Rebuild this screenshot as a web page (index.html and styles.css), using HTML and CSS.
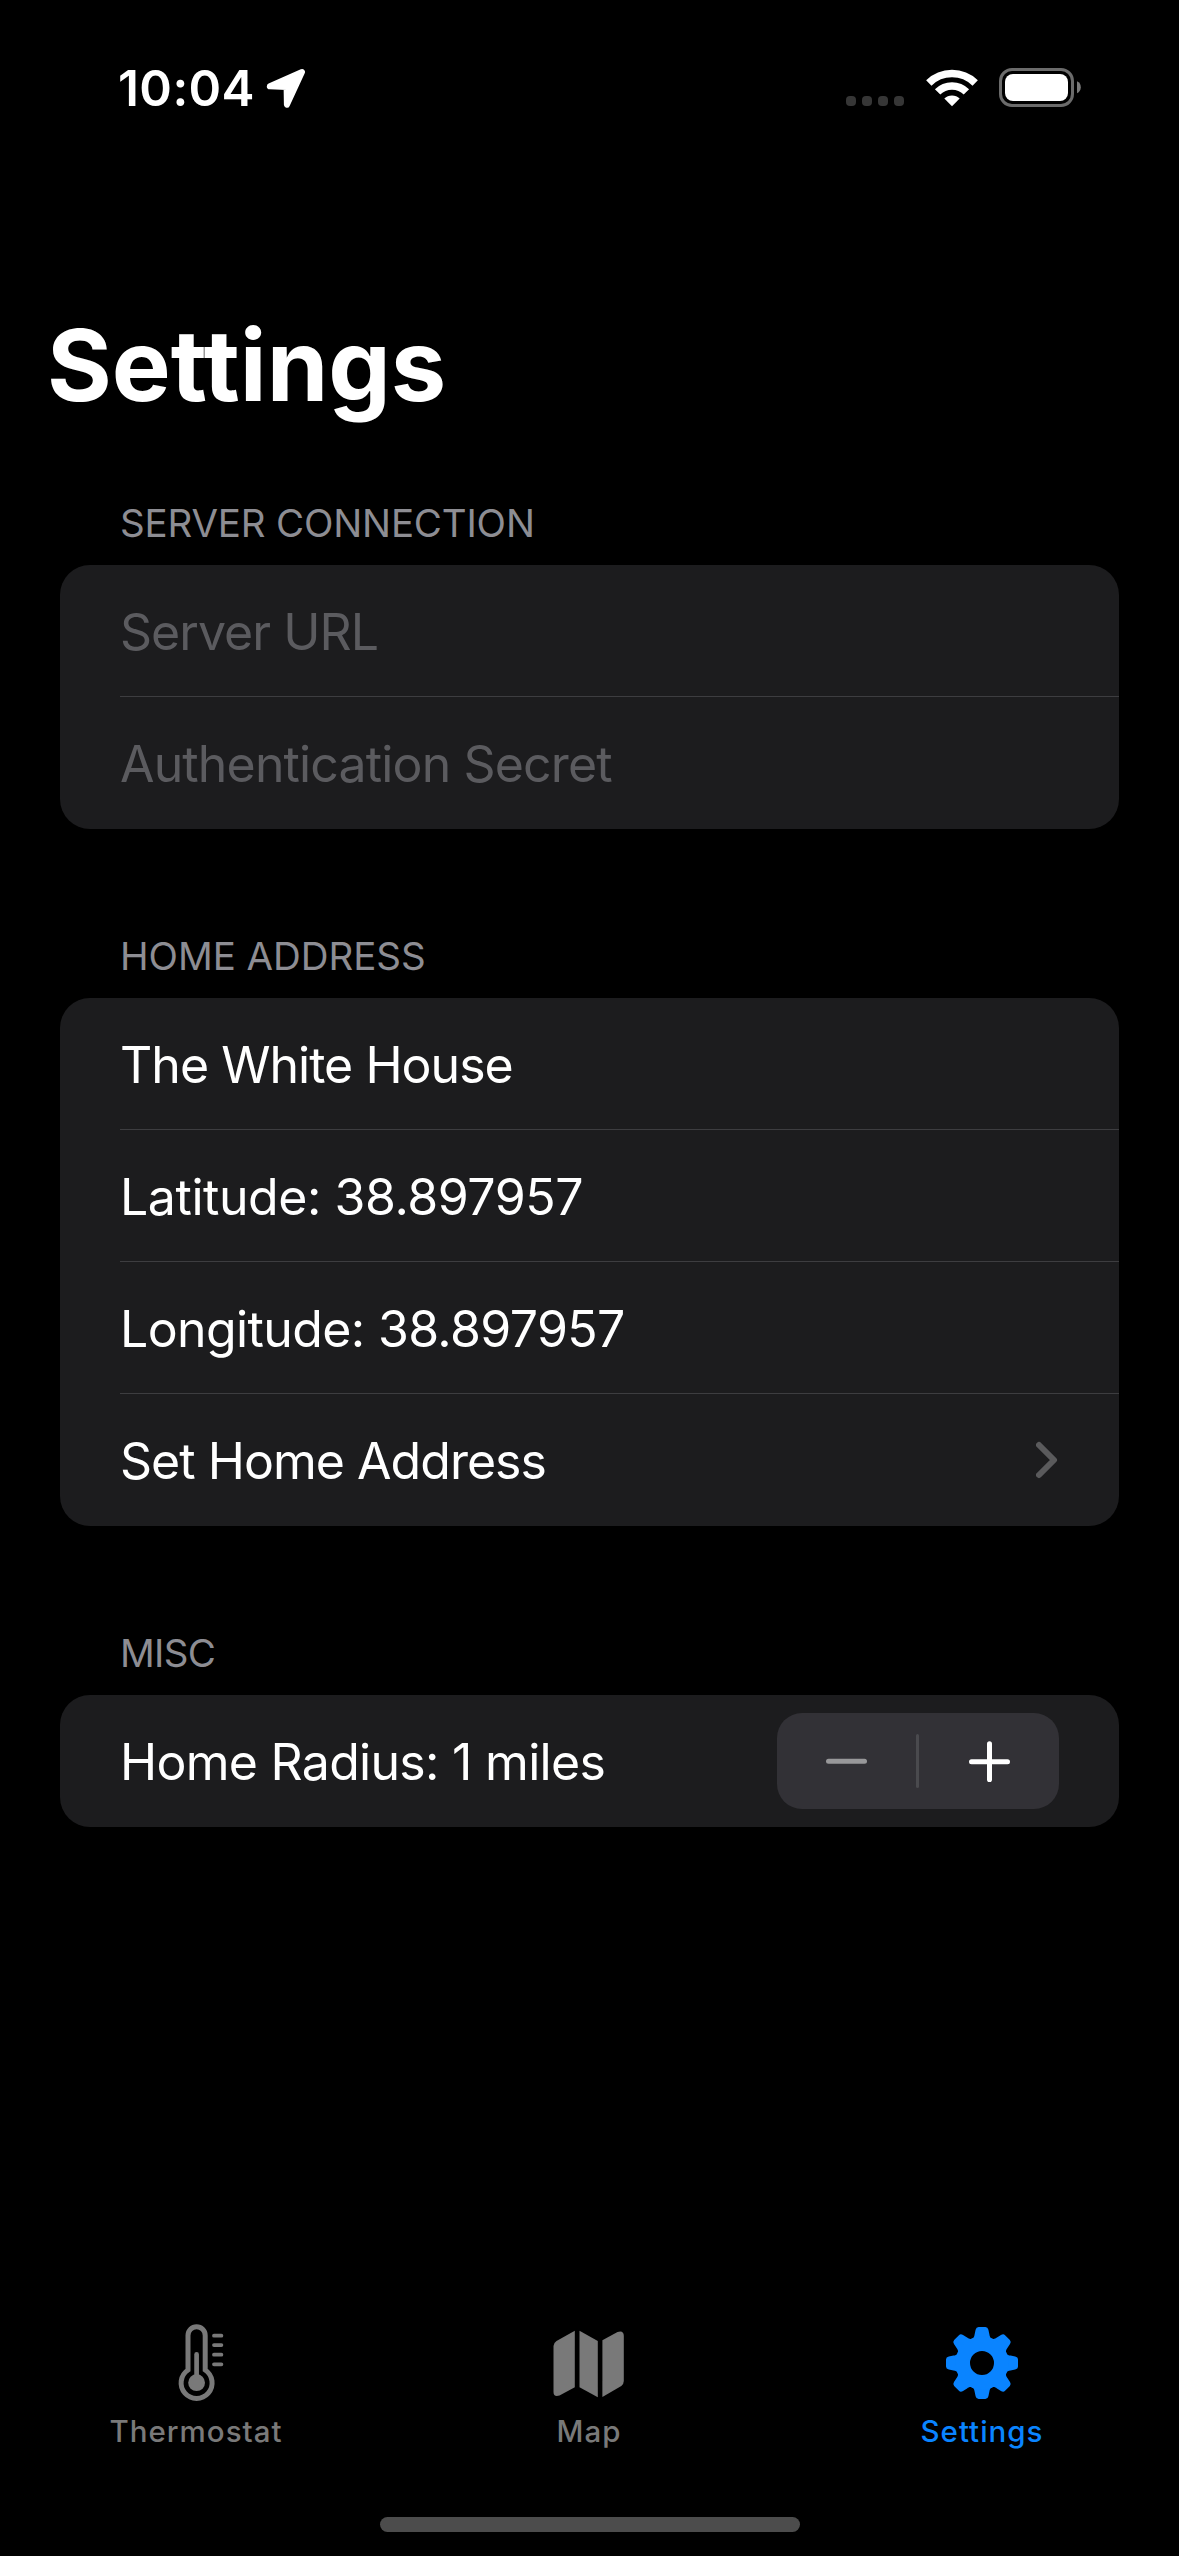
FILE: index.html
```html
<!DOCTYPE html>
<html lang="en">
<head>
<meta charset="utf-8">
<title>Settings</title>
<link rel="stylesheet" href="styles.css">
</head>
<body>
<div class="screen">
  <header class="status-bar">
    <div class="status-left">
      <span class="clock">10:04</span>
      <svg class="location" width="40" height="40" viewBox="0 0 40 40"><path d="M3.8 18.3 36 4 20.9 36.7 20.6 19Z" fill="#fff" stroke="#fff" stroke-width="6" stroke-linejoin="round"/></svg>
    </div>
    <div class="status-right">
      <div class="signal"><i></i><i></i><i></i><i></i></div>
      <svg width="54" height="38" viewBox="0 0 54 38">
        <g fill="none" stroke="#fff" stroke-width="7.6">
          <path d="M3.8 14A33.2 33.2 0 0 1 50.2 14"/>
          <path d="M12.6 22.9A20.4 20.4 0 0 1 41.4 22.9"/>
        </g>
        <path d="M27 37.3 19.3 29.6A11 11 0 0 1 34.7 29.6Z" fill="#fff"/>
      </svg>
      <svg width="82" height="40" viewBox="0 0 82 40">
        <rect x="1.5" y="1.5" width="72" height="36" rx="11.5" fill="none" stroke="#6b6b6b" stroke-width="3"/>
        <rect x="6" y="6" width="63" height="27" rx="8" fill="#fff"/>
        <path d="M78 13.3Q81.8 15 81.8 19.2T78 25.3Z" fill="#7a7a7a"/>
      </svg>
    </div>
  </header>

  <main class="content">
    <h1 class="title">Settings</h1>

    <section class="section">
      <h2 class="label">SERVER CONNECTION</h2>
      <div class="card">
        <div class="row placeholder"><span>Server URL</span></div>
        <div class="row placeholder"><span class="secret">Authentication Secret</span></div>
      </div>
    </section>

    <section class="section">
      <h2 class="label label-wide">HOME ADDRESS</h2>
      <div class="card">
        <div class="row"><span>The White House</span></div>
        <div class="row"><span class="latitude">Latitude: 38.897957</span></div>
        <div class="row"><span class="longitude">Longitude: 38.897957</span></div>
        <div class="row">
          <span>Set Home Address</span>
          <svg width="23" height="40" viewBox="0 0 23 40"><path d="M3 5 18 20 3 35" fill="none" stroke="#5a5a5c" stroke-width="6" stroke-linecap="round" stroke-linejoin="round"/></svg>
        </div>
      </div>
    </section>

    <section class="section">
      <h2 class="label label-tight">MISC</h2>
      <div class="card">
        <div class="row">
          <span class="radius">Home Radius: 1 miles</span>
          <div class="stepper">
            <div class="step"><svg width="41" height="41" viewBox="0 0 41 41"><path d="M2.5 20.2H38.5" stroke="#98989a" stroke-width="5" stroke-linecap="round"/></svg></div>
            <div class="step-divider"></div>
            <div class="step"><svg width="41" height="41" viewBox="0 0 41 41"><path d="M2.5 20.8H38.5M20.5 2.8V38.8" stroke="#fff" stroke-width="5" stroke-linecap="round"/></svg></div>
          </div>
        </div>
      </div>
    </section>
  </main>

  <nav class="tabs">
    <div class="tab">
      <svg width="84" height="84" viewBox="0 0 84 84" fill="none" stroke="#797979" stroke-linecap="round">
        <path d="M33 49V14.4a8.6 8.6 0 0 1 17.2 0V49A15.5 15.5 0 1 1 33 49Z" stroke-width="5"/>
        <path d="M41.6 33.4V60" stroke-width="4.7"/>
        <circle cx="41.6" cy="61.7" r="8.4" fill="#797979" stroke="none"/>
        <path d="M59 14.7H66.4M59 24.1H66.4M59 33.7H66.4M59 43.3H66.4" stroke-width="3.8"/>
      </svg>
      <span>Thermostat</span>
    </div>
    <div class="tab">
      <svg width="84" height="84" viewBox="0 0 84 84" fill="#797979">
        <path d="M26.8 9.7V66.3L11.5 74.6Q5.5 76.5 5.5 71V25Q5.5 22 8.5 20Z"/>
        <path d="M31.5 9.7 49.8 20V76.3L31.5 66.3Z"/>
        <path d="M54.4 19.2 69.5 11Q75.8 9 75.8 15V60Q75.8 63 73.3 65L54.4 76Z"/>
      </svg>
      <span>Map</span>
    </div>
    <div class="tab active">
      <svg width="84" height="84" viewBox="-41 -42 84 84">
        <defs><path id="tooth" d="M-10.6-24C-8.3-24.8-7.7-26.5-7.4-28.5L-6.4-33.2Q-5.8-36-3.4-36H3.4Q5.8-36 6.4-33.2L7.4-28.5C7.7-26.5 8.3-24.8 10.6-24Z"/></defs>
        <g fill="#0a84ff">
          <use href="#tooth"/><use href="#tooth" transform="rotate(45)"/><use href="#tooth" transform="rotate(90)"/><use href="#tooth" transform="rotate(135)"/><use href="#tooth" transform="rotate(180)"/><use href="#tooth" transform="rotate(225)"/><use href="#tooth" transform="rotate(270)"/><use href="#tooth" transform="rotate(315)"/>
        </g>
        <circle r="19.2" fill="none" stroke="#0a84ff" stroke-width="14.4"/>
      </svg>
      <span>Settings</span>
    </div>
  </nav>
  <div class="home-indicator"></div>
</div>
</body>
</html>
```
FILE: styles.css
```css
* { box-sizing: border-box; }
body { margin: 0; background: #000; color: #fff; font-family: Inter, "Liberation Sans", sans-serif; }
svg { display: block; flex: none; }
.screen { width: 1179px; height: 2556px; display: flex; flex-direction: column; background: #000; overflow: hidden; }

.status-bar { height: 176px; flex: none; padding: 0 98px 0 118px; display: flex; align-items: center; justify-content: space-between; }
.status-left { display: flex; align-items: center; }
.clock { width: 148px; font-size: 49.5px; font-weight: 600; line-height: 60px; letter-spacing: 0.4px; white-space: nowrap; }
.status-right { display: flex; align-items: center; gap: 20.5px; }
.signal { display: flex; gap: 6px; padding-top: 26px; }
.signal i { width: 10px; height: 10px; border-radius: 4px; background: #363636; }

.content { flex: 1; padding: 129px 60px 0; }
.title { margin: 0 0 74px -13px; font-size: 99px; font-weight: 700; line-height: 120px; }
.section { margin-bottom: 103px; }
.label { margin: 0 0 18px; padding-left: 60px; font-size: 38.5px; font-weight: 400; line-height: 48px; letter-spacing: -0.18px; color: #8d8d93; }
.label-wide { letter-spacing: -0.05px; }
.label-tight { letter-spacing: -0.7px; }
.card { background: #1c1c1e; border-radius: 30px; overflow: hidden; }
.row { height: 132px; margin-left: 60px; padding-right: 60px; display: flex; align-items: center; justify-content: space-between; font-size: 50px; letter-spacing: -0.97px; white-space: nowrap; }
.row + .row { box-shadow: 0 -1px #3d3d40; }
.row > span { padding-top: 2px; line-height: 60px; }
.placeholder { color: #5b5b5f; }
.row .secret { letter-spacing: -0.85px; }
.row .latitude { letter-spacing: -0.44px; }
.row .longitude { letter-spacing: -0.62px; }
.row .radius { letter-spacing: -0.71px; }

.stepper { width: 282px; height: 96px; display: flex; align-items: center; background: #323136; border-radius: 25px; }
.step { width: 140px; display: flex; justify-content: center; }
.step:first-child { width: 139px; }
.step-divider { width: 3px; height: 54px; background: #4a4a4e; border-radius: 1.5px; }

.tabs { height: 196px; flex: none; display: grid; grid-template-columns: repeat(3, 1fr); color: #797979; }
.tab { display: flex; flex-direction: column; align-items: center; gap: 8px; font-size: 29.5px; font-weight: 450; line-height: 36px; letter-spacing: 1px; }
.tab span { margin-left: -1px; }
.active { color: #0a84ff; }
.home-indicator { width: 420px; height: 15px; flex: none; margin: 0 0 24px 380px; border-radius: 8px; background: #4c4c4c; }
```
